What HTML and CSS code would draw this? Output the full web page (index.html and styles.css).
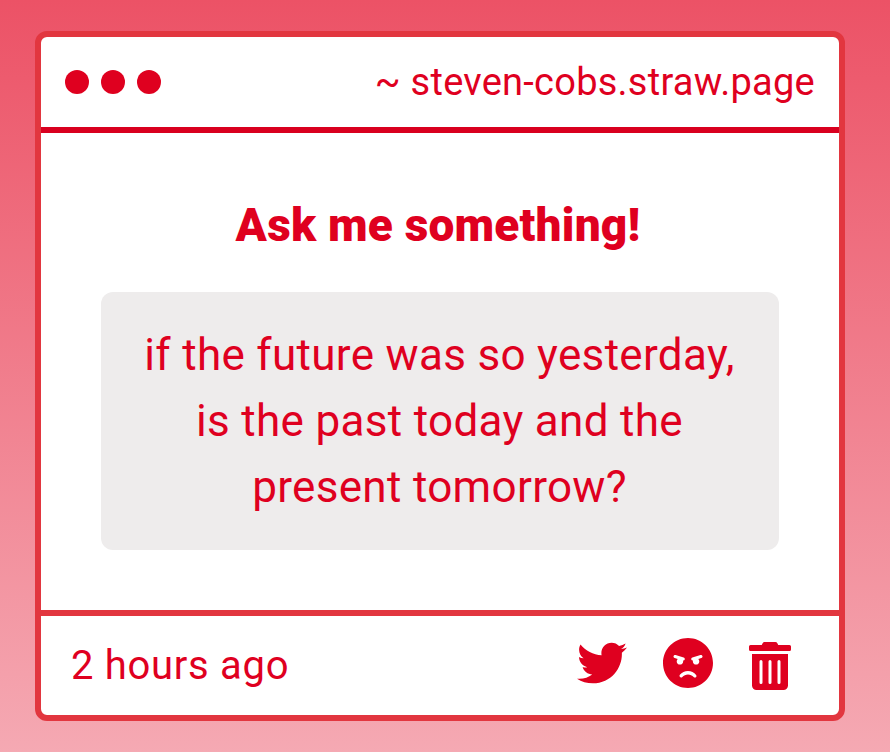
FILE: index.html
```html
<!DOCTYPE html>
<html lang="en">
<head>
    <meta charset="UTF-8">
    <meta name="viewport" content="width=device-width, initial-scale=1.0">
    <title>Ask me something!</title>
    <link rel="stylesheet" href="styles.css">
</head>
<body>
    <main class="card">
        <header class="card-header">
            <div class="dots">
                <span class="dot"></span>
                <span class="dot"></span>
                <span class="dot"></span>
            </div>
            <span class="site">~ steven-cobs.straw.page</span>
        </header>
        <section class="card-body">
            <h1 class="title">Ask me something!</h1>
            <p class="question">if the future was so yesterday,<br>is the past today and the<br>present tomorrow?</p>
        </section>
        <footer class="card-footer">
            <span class="time">2 hours ago</span>
            <div class="actions">
                <svg class="icon icon-twitter" viewBox="0 0 512 512"><path d="M459.37 151.716c.325 4.548.325 9.097.325 13.645 0 138.72-105.583 298.558-298.558 298.558-59.452 0-114.68-17.219-161.137-47.106 8.447.974 16.568 1.299 25.34 1.299 49.055 0 94.213-16.568 130.274-44.832-46.132-.975-84.792-31.188-98.112-72.772 6.498.974 12.995 1.624 19.818 1.624 9.421 0 18.843-1.3 27.614-3.573-48.081-9.747-84.143-51.98-84.143-102.985v-1.299c13.969 7.797 30.214 12.67 47.431 13.319-28.264-18.843-46.781-51.005-46.781-87.391 0-19.492 5.197-37.36 14.294-52.954 51.655 63.675 129.3 105.258 216.365 109.807-1.624-7.797-2.599-15.918-2.599-24.04 0-57.828 46.782-104.934 104.934-104.934 30.213 0 57.502 12.67 76.67 33.137 23.715-4.548 46.456-13.32 66.599-25.34-7.798 24.366-24.366 44.833-46.132 57.827 21.117-2.273 41.584-8.122 60.426-16.243-14.292 20.791-32.161 39.308-52.628 54.253z"/></svg>
                <svg class="icon icon-angry" viewBox="0 8 496 496"><path d="M248 8C111 8 0 119 0 256s111 248 248 248 248-111 248-248S385 8 248 8zM136 240c0-9.3 4.1-17.5 10.5-23.4l-31-9.3c-8.5-2.5-13.3-11.5-10.7-19.9 2.5-8.5 11.4-13.2 19.9-10.7l80 24c8.5 2.5 13.3 11.5 10.7 19.9-2.1 6.9-8.4 11.4-15.3 11.4-.5 0-1.1-.2-1.7-.2.7 2.7 1.7 5.3 1.7 8.2 0 17.7-14.3 32-32 32S136 257.7 136 240zm168 154.2c-27.8-33.4-84.2-33.4-112.1 0-13.5 16.3-38.2-4.2-24.6-20.5 20-24 49.4-37.6 80.6-37.6s60.6 13.8 80.6 37.8c13.8 16.5-11.1 36.6-24.5 20.3zm76.6-186.9l-31 9.3c6.3 5.8 10.5 14.1 10.5 23.4 0 17.7-14.3 32-32 32s-32-14.3-32-32c0-2.9.9-5.6 1.7-8.2-.6.1-1.1.2-1.7.2-6.9 0-13.2-4.5-15.3-11.4-2.5-8.5 2.3-17.4 10.7-19.9l80-24c8.4-2.5 17.4 2.3 19.9 10.7 2.5 8.5-2.3 17.4-10.8 19.9z"/></svg>
                <svg class="icon icon-trash" viewBox="0 0 448 512"><path d="M32 464a48 48 0 0 0 48 48h288a48 48 0 0 0 48-48V128H32zm272-256a16 16 0 0 1 32 0v224a16 16 0 0 1-32 0zm-96 0a16 16 0 0 1 32 0v224a16 16 0 0 1-32 0zm-96 0a16 16 0 0 1 32 0v224a16 16 0 0 1-32 0zM432 32H312l-9.4-18.7A24 24 0 0 0 281.1 0H166.8a23.72 23.72 0 0 0-21.4 13.3L136 32H16A16 16 0 0 0 0 48v32a16 16 0 0 0 16 16h416a16 16 0 0 0 16-16V48a16 16 0 0 0-16-16z"/></svg>
            </div>
        </footer>
    </main>
</body>
</html>
```

FILE: styles.css
```css
* {
    box-sizing: border-box;
}
body {
    margin: 0;
    padding: 31px 45px 31px 35px;
    height: 752px;
    font-family: Roboto, sans-serif;
    color: #df001f;
    background: linear-gradient(#ec5266, #f5a9b3);
}
.card {
    display: flex;
    flex-direction: column;
    height: 690px;
    background: #fff;
    border: 6px solid #e2363f;
    border-radius: 12px;
}
.card-header {
    display: flex;
    align-items: center;
    justify-content: space-between;
    height: 96px;
    padding: 0 24px;
    border-bottom: 6px solid #d9001f;
}
.dots {
    display: flex;
    gap: 12px;
}
.dot {
    width: 24px;
    height: 24px;
    border-radius: 50%;
    background: #df001f;
}
.site {
    margin-top: -1px;
    font-size: 38px;
    letter-spacing: 0.25px;
}
.card-body {
    flex: 1;
    padding: 59px 60px 60px;
    text-align: center;
}
.title {
    margin: 0 4px 34px 0;
    font-size: 46px;
    font-weight: 900;
    line-height: 66px;
    letter-spacing: 0.2px;
}
.question {
    margin: 0;
    padding: 30px 31px 30px 30px;
    height: 258px;
    font-size: 44px;
    line-height: 66px;
    letter-spacing: 0.32px;
    background: #eeecec;
    border-radius: 12px;
}
.card-footer {
    display: flex;
    align-items: center;
    justify-content: space-between;
    height: 105px;
    padding: 0 48px 0 30px;
    border-top: 6px solid #e2363f;
}
.time {
    font-size: 40px;
    letter-spacing: 0.7px;
}
.actions {
    display: flex;
    align-items: center;
    gap: 36px;
    margin-bottom: 6px;
}
.icon {
    display: block;
    height: 50px;
    fill: #df001f;
}
.icon-twitter, .icon-angry {
    width: 50px;
}
.icon-trash {
    width: 42px;
    height: 48px;
    margin-top: 6px;
}
```
